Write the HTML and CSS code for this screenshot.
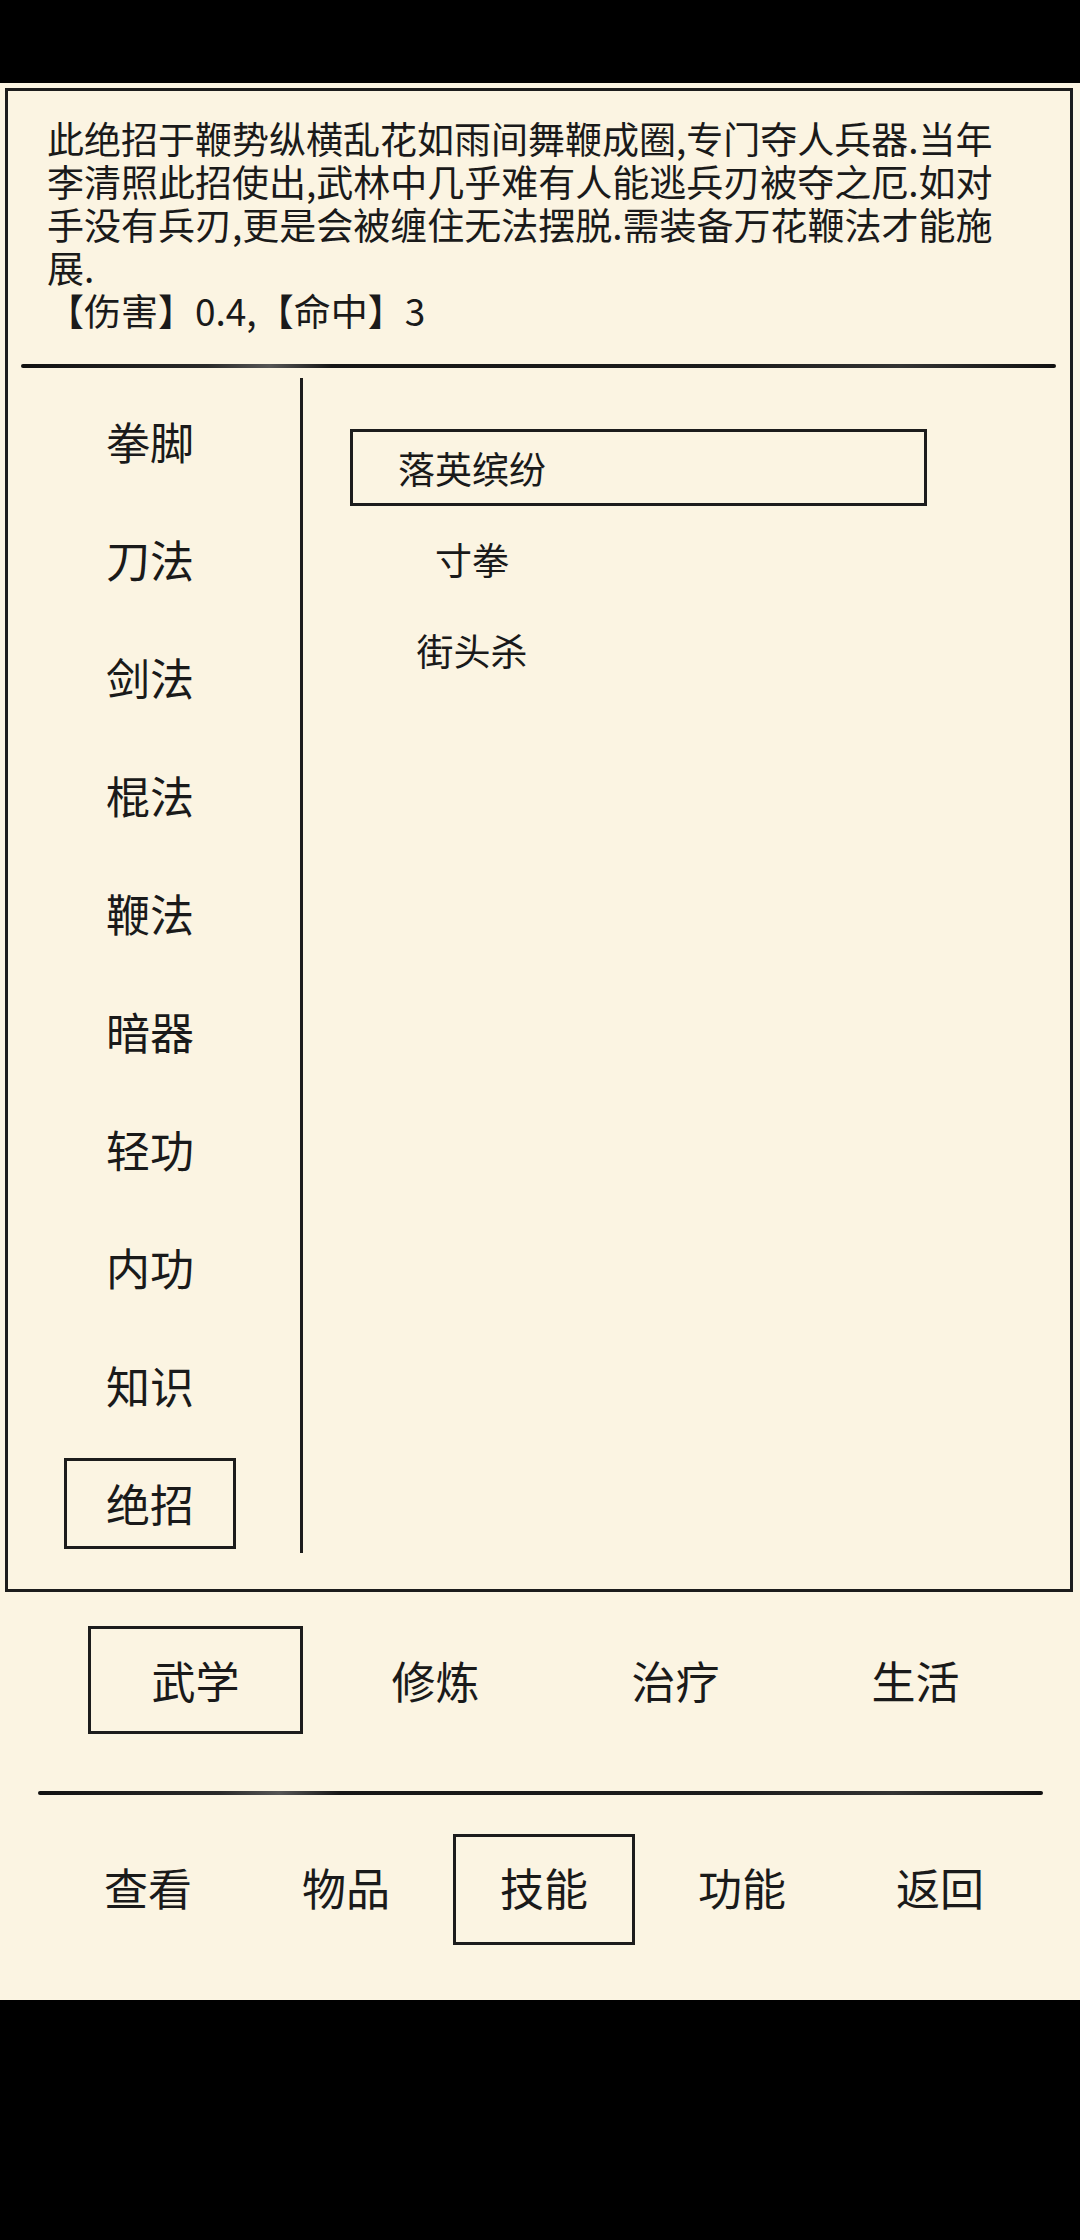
FILE: index.html
```html
<!DOCTYPE html>
<html lang="zh-CN">
<head>
    <meta charset="UTF-8">
    <meta name="viewport" content="width=device-width, initial-scale=1.0">
    <title>技能</title>
    <link rel="stylesheet" href="styles.css">
</head>
<body>
    <div class="status-bar"></div>

    <div class="screen">
        <div class="panel">
            <div class="desc">
                <p>此绝招于鞭势纵横乱花如雨间舞鞭成圈,专门夺人兵器.当年李清照此招使出,武林中几乎难有人能逃兵刃被夺之厄.如对手没有兵刃,更是会被缠住无法摆脱.需装备万花鞭法才能施展.</p>
                <p>【伤害】0.4,【命中】3</p>
            </div>
            <div class="rule"></div>

            <div class="browser">
                <ul class="categories">
                    <li class="category">拳脚</li>
                    <li class="category">刀法</li>
                    <li class="category">剑法</li>
                    <li class="category">棍法</li>
                    <li class="category">鞭法</li>
                    <li class="category">暗器</li>
                    <li class="category">轻功</li>
                    <li class="category">内功</li>
                    <li class="category">知识</li>
                    <li class="category active"><span>绝招</span></li>
                </ul>

                <ul class="skills">
                    <li class="skill active"><span>落英缤纷</span></li>
                    <li class="skill"><span>寸拳</span></li>
                    <li class="skill"><span>街头杀</span></li>
                </ul>
            </div>
        </div>

        <div class="tabs">
            <div class="tab active">武学</div>
            <div class="tab">修炼</div>
            <div class="tab">治疗</div>
            <div class="tab">生活</div>
        </div>

        <div class="rule rule-wide"></div>

        <div class="nav">
            <div class="nav-item">查看</div>
            <div class="nav-item">物品</div>
            <div class="nav-item active">技能</div>
            <div class="nav-item">功能</div>
            <div class="nav-item">返回</div>
        </div>
    </div>

    <div class="nav-bar"></div>
</body>
</html>
```

FILE: styles.css
```css
* {
    margin: 0;
    padding: 0;
    box-sizing: border-box;
}

body {
    width: 1080px;
    background: #000;
    color: #1a1a1a;
    font-family: "Noto Sans CJK SC", "Noto Sans", sans-serif;
}

ul {
    list-style: none;
}

.status-bar {
    height: 83px;
    background: #000;
}

.nav-bar {
    height: 240px;
    background: #000;
}

.screen {
    height: 1917px;
    background: #fbf4e2;
    overflow: hidden;
}

/* main framed panel */
.panel {
    width: 1068px;
    height: 1504px;
    margin: 5px 0 0 5px;
    border: 3px solid #1c1c1c;
}

.desc {
    padding: 26px 0 0 39px;
    width: 1010px;
    font-size: 37px;
    line-height: 43px;
}

/* brush-like horizontal divider */
.rule {
    height: 4px;
    margin: 32px 14px 0 13px;
    border-radius: 2px;
    background: linear-gradient(to right, #111 0%, #2a2a2a 18%, #555 24%, #161616 30%, #1c1c1c 70%, #333 85%, #111 100%);
}

.browser {
    display: flex;
}

.categories {
    width: 295px;
    height: 1175px;
    margin-top: 10px;
    padding: 4px 8px 0 0;
    border-right: 3px solid #1c1c1c;
}

.category {
    height: 118px;
    display: flex;
    align-items: center;
    justify-content: center;
    font-size: 44px;
}

.category.active span {
    width: 172px;
    height: 91px;
    display: flex;
    align-items: center;
    justify-content: center;
    border: 3px solid #1c1c1c;
}

.skills {
    padding: 61px 0 0 47px;
    display: flex;
    flex-direction: column;
    gap: 14px;
}

.skill {
    width: 577px;
    height: 77px;
    display: flex;
    align-items: center;
    border: 3px solid transparent;
    font-size: 37px;
}

.skill span {
    width: 238px;
    text-align: center;
}

.skill.active {
    border-color: #1c1c1c;
}

/* bottom tab rows */
.tabs {
    display: flex;
    gap: 25px;
    margin: 34px 0 0 88px;
}

.tab {
    width: 215px;
    height: 108px;
    display: flex;
    align-items: center;
    justify-content: center;
    border: 3px solid transparent;
    font-size: 44px;
}

.rule-wide {
    margin: 57px 37px 0 38px;
}

.nav {
    display: flex;
    gap: 16px;
    margin: 39px 0 0 57px;
}

.nav-item {
    width: 182px;
    height: 111px;
    display: flex;
    align-items: center;
    justify-content: center;
    padding-bottom: 5px;
    border: 3px solid transparent;
    font-size: 44px;
}

.tab.active,
.nav-item.active {
    border-color: #1c1c1c;
}
```
